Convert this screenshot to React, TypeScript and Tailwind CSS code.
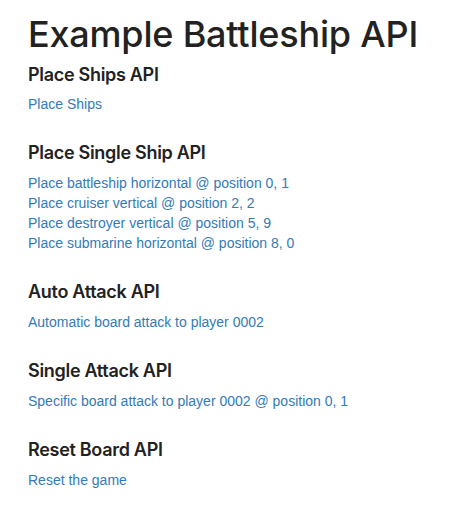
const sections = [
  { title: 'Place Ships API', links: ['Place Ships'] },
  {
    title: 'Place Single Ship API',
    links: [
      'Place battleship horizontal @ position 0, 1',
      'Place cruiser vertical @ position 2, 2',
      'Place destroyer vertical @ position 5, 9',
      'Place submarine horizontal @ position 8, 0',
    ],
  },
  { title: 'Auto Attack API', links: ['Automatic board attack to player 0002'] },
  { title: 'Single Attack API', links: ['Specific board attack to player 0002 @ position 0, 1'] },
  { title: 'Reset Board API', links: ['Reset the game'] },
]

export default function App() {
  return (
    <div className="min-h-[512px] bg-white pl-[28px] pt-[15px] text-[#222] [font-family:'Liberation_Sans',Arial,sans-serif]">
      <h1 className="mb-[10px] text-[36px] leading-[39.6px] font-medium tracking-[-0.2px] [font-family:Inter,sans-serif]">
        Example Battleship API
      </h1>
      {sections.map((s, i) => (
        <section key={s.title} className={i === 0 ? '' : 'mt-[29px]'}>
          <h4 className="my-[10px] text-[18px] leading-[19.8px] font-semibold tracking-[-0.3px] [font-family:Inter,sans-serif]">
            {s.title}
          </h4>
          <div className="text-[14px] leading-[20px]">
            {s.links.map((l) => (
              <div key={l}>
                <a href="#" className="text-[#337ab7]">
                  {l}
                </a>
              </div>
            ))}
          </div>
        </section>
      ))}
    </div>
  )
}
